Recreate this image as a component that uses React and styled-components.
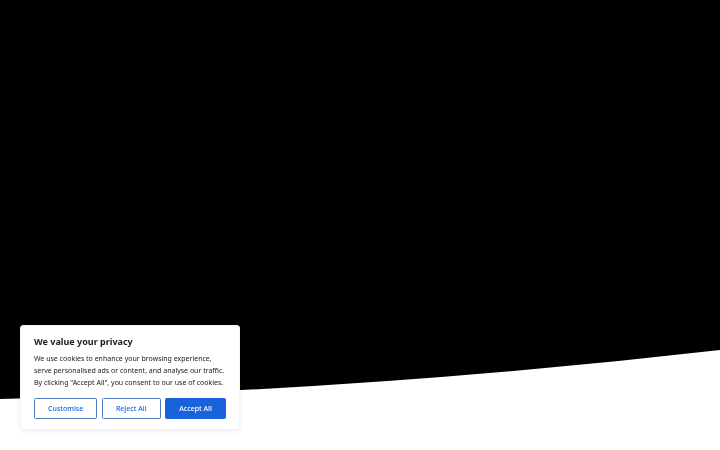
import styled, { createGlobalStyle } from 'styled-components';

const GlobalStyle = createGlobalStyle`
    html, body {
        margin: 0;
        padding: 0;
        background: #fff;
        font-family: "Noto Sans", "Open Sans", sans-serif;
    }
`;

const Page = styled.div`
    width: 100%;
    height: 450px;
    overflow: hidden;
    background: #fff;
`;

const Hero = styled.section`
    height: 400px;
    line-height: 0;

    svg {
        display: block;
        width: 100%;
        height: 100%;
    }
`;

const Banner = styled.div`
    position: fixed;
    left: 20px;
    bottom: 20px;
    width: 220px;
    box-sizing: border-box;
    padding: 10px 13px 10px;
    background: #fff;
    border: 0.5px solid #f4f4f4;
    border-radius: 3px;
    box-shadow: 0 1px 5px rgba(0, 0, 0, 0.08);
    color: #212121;
`;

const Title = styled.p`
    margin: 0 0 6.5px;
    font-size: 9px;
    line-height: 11px;
    font-weight: 700;
    color: #212121;
`;

const Notice = styled.p`
    margin: 0 0 9px;
    font-size: 7px;
    line-height: 12px;
    color: #212121;
`;

const Actions = styled.div`
    display: flex;
    gap: 4.5px;
`;

const Button = styled.button`
    flex: 1 1 auto;
    box-sizing: border-box;
    height: 21px;
    padding: 0 6px;
    border: 1px solid ${(p) => (p.$primary ? '#1863dc' : '#4f7bc0')};
    border-radius: 1.5px;
    font-family: inherit;
    font-size: 7px;
    font-weight: 500;
    cursor: pointer;
    color: ${(p) => (p.$primary ? '#fff' : '#1863dc')};
    background: ${(p) => (p.$primary ? '#1863dc' : '#fff')};
`;

const App = () => {
    return <Page>
        <GlobalStyle />
        <Hero>
            <svg viewBox="0 0 720 400" preserveAspectRatio="none">
                <path d="M0 0 H720 V350 Q360 391.5 0 399 Z" fill="#000" />
            </svg>
        </Hero>
        <Banner>
            <Title>We value your privacy</Title>
            <Notice>
                We use cookies to enhance your browsing experience, serve personalised ads or content, and analyse our traffic. By clicking "Accept All", you consent to our use of cookies.
            </Notice>
            <Actions>
                <Button>Customise</Button>
                <Button>Reject All</Button>
                <Button $primary>Accept All</Button>
            </Actions>
        </Banner>
    </Page>;
};

export default App;
